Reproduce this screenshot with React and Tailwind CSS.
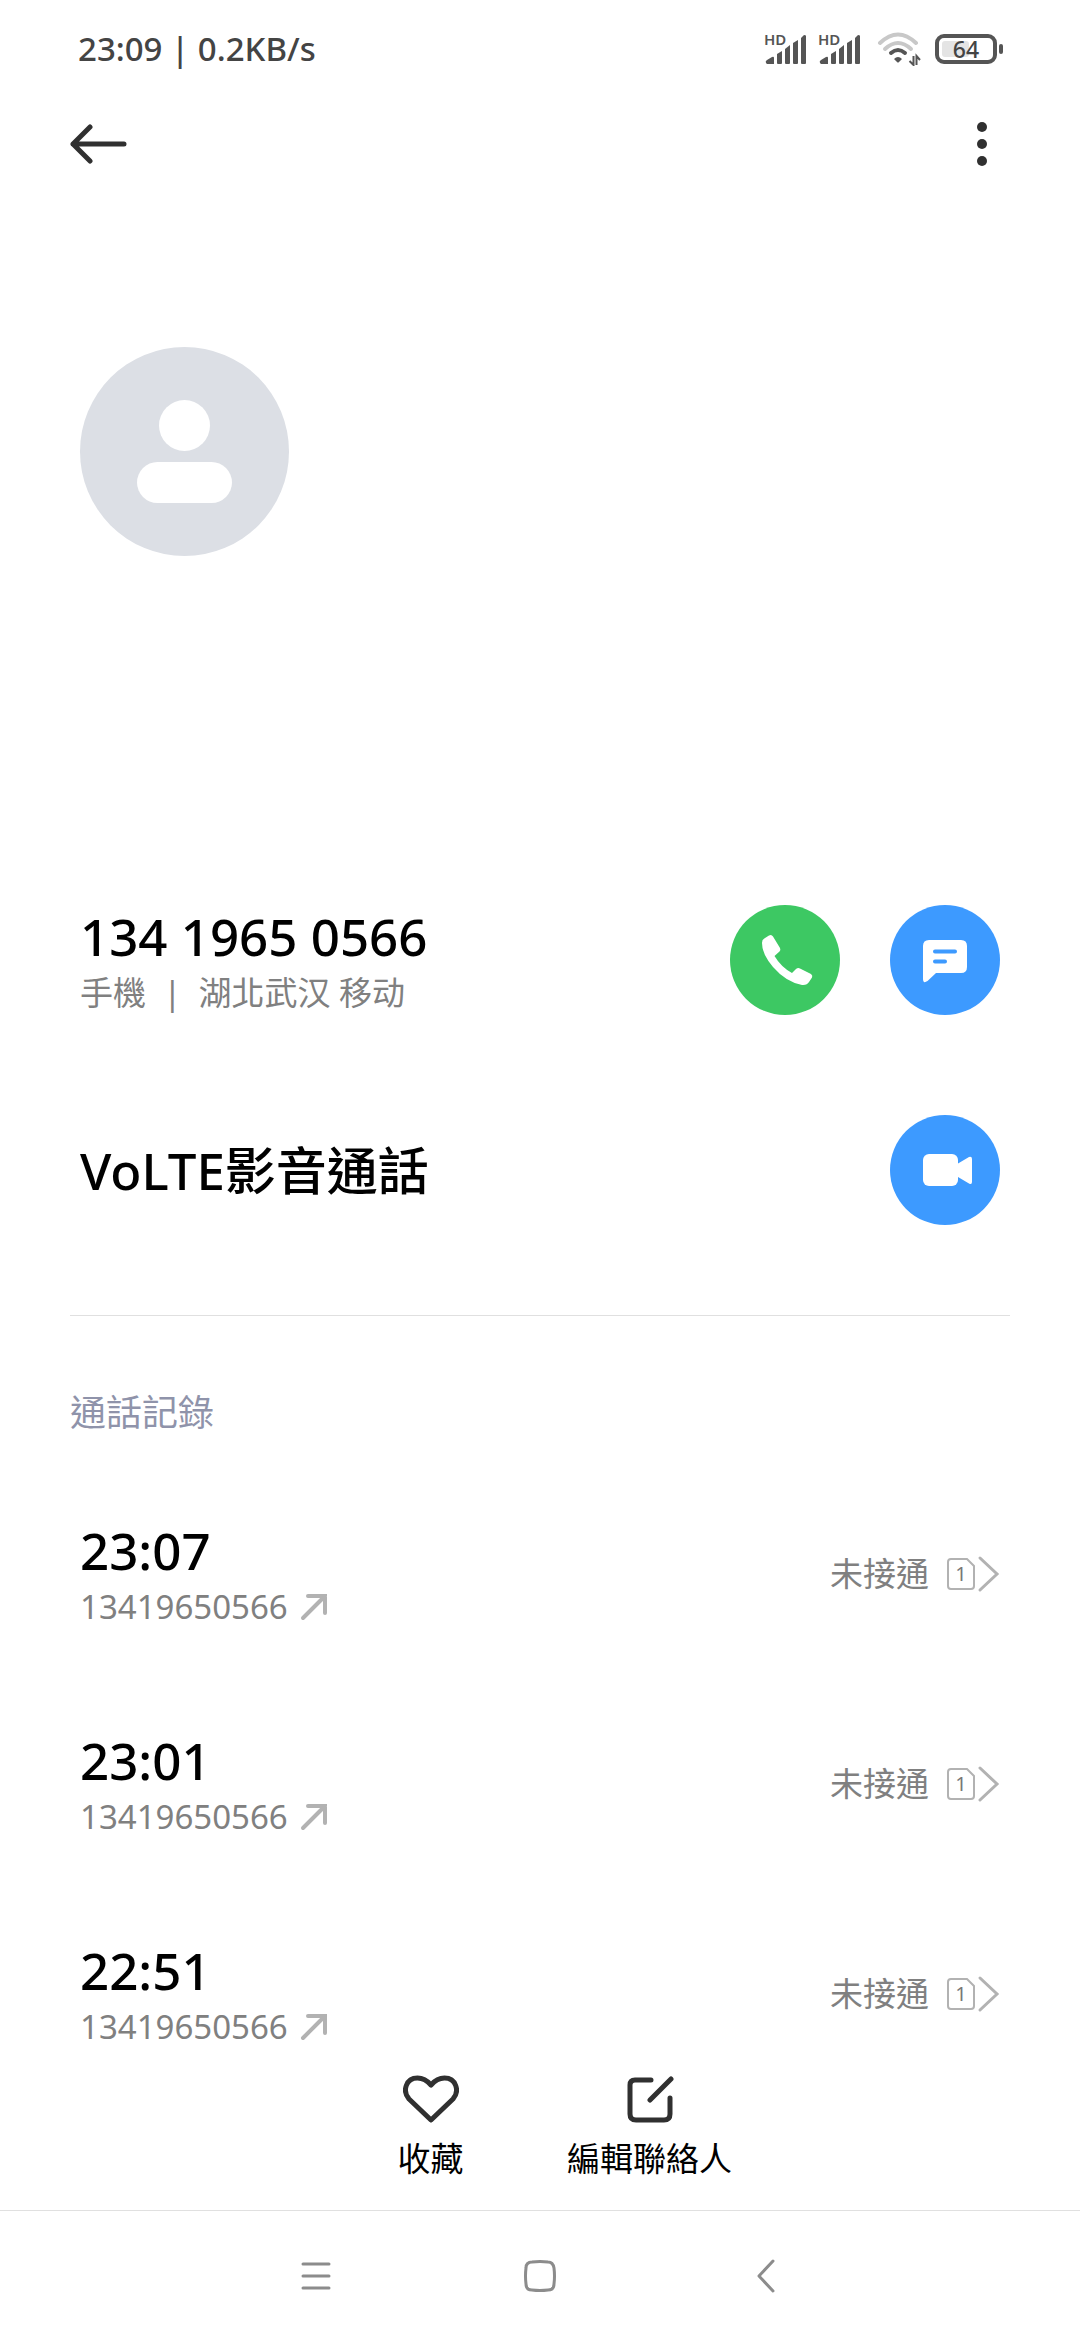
import React from 'react';

const callLog = [
  { time: '23:07', number: '13419650566', status: '未接通', sim: 1 },
  { time: '23:01', number: '13419650566', status: '未接通', sim: 1 },
  { time: '22:51', number: '13419650566', status: '未接通', sim: 1 },
];

const SignalIcon = () => (
  <svg width="42" height="42" viewBox="0 -5 42 42" fill="#555" className="overflow-visible font-['Noto_Sans']">
    <text x="-1" y="12" fontSize="15" fontWeight="600">HD</text>
    <path d="M1 30Q0 28 2 27L7 24Q9 23 9 25V31H2Z" />
    <path d="M12 21L17 18V30Q17 31 16 31H13Q12 31 12 30Z" />
    <path d="M20 16L25 12V30Q25 31 24 31H21Q20 31 20 30Z" />
    <path d="M28 10L33 7V30Q33 31 32 31H29Q28 31 28 30Z" />
    <path d="M36 5L39 2Q41 2 41 3V30Q41 31 40 31H37Q36 31 36 30Z" />
  </svg>
);

const WifiIcon = () => (
  <svg width="44" height="34" viewBox="0 0 44 34" fill="none" strokeLinecap="round">
    <path d="M3 11Q21 -6 39 11" stroke="#c8c8c8" strokeWidth="4" />
    <path d="M8 17Q21 5 34 17" stroke="#c8c8c8" strokeWidth="4" />
    <path d="M14 21Q21 15 28 21" stroke="#555" strokeWidth="4" />
    <path d="M17 27Q21 23 25 27L22 30Q21 31 20 30Z" fill="#555" />
    <path d="M36.500 24V33L32.500 29M39.500 33V24L43 28" stroke="#555" strokeWidth="2" strokeLinecap="butt" />
  </svg>
);

const Battery = ({ level }) => (
  <div className="flex items-center gap-[2px]">
    <div className="relative flex h-[30px] w-[62px] items-center justify-center rounded-[9px] border-4 border-[#555]">
      <div className="absolute inset-y-[3px] left-[3px] rounded-[3px] bg-[#e4e4e4]" style={{ width: `${level * 0.42}px` }} />
      <span className="relative text-[23px] leading-[22px] font-medium text-[#444]">{level}</span>
    </div>
    <div className="h-[10px] w-[4px] rounded-[2px] bg-[#555]" />
  </div>
);

const BackIcon = () => (
  <svg width="58" height="40" viewBox="0 0 58 40" fill="none" stroke="#303030" strokeWidth="5" strokeLinecap="round" strokeLinejoin="round">
    <path d="M54 20H3M20 3L3 20L20 37" />
  </svg>
);

const MoreIcon = () => (
  <svg width="12" height="46" viewBox="0 0 12 46" fill="#303030">
    <circle cx="6" cy="6" r="5" />
    <circle cx="6" cy="23" r="5" />
    <circle cx="6" cy="40" r="5" />
  </svg>
);

const PhoneIcon = () => (
  <svg viewBox="0 0 110 110" fill="#fff">
    <path d="M39 30.500Q41.500 29 43 31.500L50 43Q51 45 49.500 46.500L44.500 51Q51 62 62 68L66 64Q68 62.500 70 63.500L81 69Q83 70.500 82 72.500L79 77Q77 80.500 72 80Q56 77 43 62Q32 49 32 38Q32 34.500 35 33Z" />
  </svg>
);

const MessageIcon = () => (
  <svg viewBox="0 0 110 110" fill="#fff">
    <path d="M39 35H71Q77 35 77 41V62Q77 68 71 68H46L37.500 76Q33 79 33 74V41Q33 35 39 35Z" />
    <path d="M45 46.500H65M45 56.500H55" stroke="#3d9aff" strokeWidth="4" strokeLinecap="round" />
  </svg>
);

const VideoIcon = () => (
  <svg viewBox="0 0 110 110" fill="#fff">
    <rect x="33" y="39" width="35" height="32" rx="6" />
    <path d="M68 48.500L79 42Q82 41 82 44V67Q82 70 79 68.500L68 62Z" />
  </svg>
);

const OutgoingIcon = () => (
  <svg width="28" height="28" viewBox="0 0 28 28" fill="none" stroke="#b2b2b2" strokeWidth="4" strokeLinecap="round">
    <path d="M8 3H25V20M25 3L3 25" />
  </svg>
);

const SimIcon = ({ slot }) => (
  <svg width="28" height="32" viewBox="0 0 28 32" className="font-['Noto_Sans']">
    <path d="M4 1H20L27 8V28Q27 31 24 31H4Q1 31 1 28V4Q1 1 4 1Z" fill="none" stroke="#b2b2b2" strokeWidth="2" />
    <text x="14" y="23" fontSize="20" textAnchor="middle" fill="#777">{slot}</text>
  </svg>
);

const ChevronIcon = () => (
  <svg width="25" height="38" viewBox="0 0 25 38" fill="none" stroke="#b2b2b2" strokeWidth="3" strokeLinecap="round">
    <path d="M5 3L22 19L5 35" />
  </svg>
);

const HeartIcon = () => (
  <svg width="56" height="48" viewBox="0 0 56 48" fill="none" stroke="#303030" strokeWidth="5" strokeLinejoin="round">
    <path d="M28 10Q22 3 14.500 3C3 3 -1 16 6 24L28 45L50 24C57 16 53 3 41.500 3Q34 3 28 10Z" />
  </svg>
);

const EditIcon = () => (
  <svg width="48" height="48" viewBox="0 0 48 48" fill="none" stroke="#303030" strokeWidth="5" strokeLinecap="round">
    <path d="M25 5H9Q4 5 4 10V39Q4 45 10 45H38Q44 45 44 39V23M24 25L45 4" />
  </svg>
);

const CircleButton = ({ label, className, children }) => (
  <button type="button" aria-label={label} className={`size-[110px] rounded-full ${className}`}>
    {children}
  </button>
);

const App = () => {
  return (
    <div className="flex h-screen flex-col bg-white font-['Noto_Sans','Noto_Sans_CJK_TC',sans-serif] text-black">
      {/* Status bar */}
      <div className="flex h-[98px] shrink-0 items-center justify-between pr-[77px] pl-[78px] text-[#444]">
        <div className="text-[33px] leading-[48px] font-medium">23:09 | 0.2KB/s</div>
        <div className="flex items-center gap-3">
          <SignalIcon />
          <SignalIcon />
          <div className="flex items-center gap-[14px] pl-1">
            <WifiIcon />
            <Battery level={64} />
          </div>
        </div>
      </div>

      <header className="flex h-[92px] shrink-0 items-center justify-between pr-[92px] pl-[70px]">
        <button type="button" aria-label="返回"><BackIcon /></button>
        <button type="button" aria-label="更多"><MoreIcon /></button>
      </header>

      <main className="min-h-0 flex-1 overflow-hidden">
        {/* Avatar */}
        <div className="px-20 pt-[157px] pb-[299px]">
          <div className="flex size-[209px] flex-col items-center gap-[11px] rounded-full bg-[#dcdfe5] pt-[53px]">
            <div className="size-[51px] rounded-full bg-white" />
            <div className="h-[41px] w-[95px] rounded-full bg-white" />
          </div>
        </div>

        {/* Numbers */}
        <section className="px-20">
          <div className="flex h-[210px] items-center justify-between">
            <div>
              <h1 className="text-[51px] leading-[66px] font-medium">134 1965 0566</h1>
              <p className="text-[33px] leading-[48px] whitespace-pre text-[#808080]">手機  |  湖北武汉 移动</p>
            </div>
            <div className="flex gap-[50px]">
              <CircleButton label="撥號" className="bg-[#3dc863]"><PhoneIcon /></CircleButton>
              <CircleButton label="訊息" className="bg-[#3d9aff]"><MessageIcon /></CircleButton>
            </div>
          </div>
          <div className="flex h-[210px] items-center justify-between">
            <h2 className="text-[51px] leading-[66px] font-medium">VoLTE影音通話</h2>
            <CircleButton label="視訊" className="bg-[#3d9aff]"><VideoIcon /></CircleButton>
          </div>
        </section>

        <hr className="mx-[70px] mt-10 border-[#e0e0e0]" />

        {/* Call log */}
        <section>
          <h2 className="px-[70px] pt-[73px] pb-8 text-4xl leading-[48px] text-[#8f93aa]">通話記錄</h2>
          <ul>
            {callLog.map((call) => (
              <li key={call.time} className="flex h-[210px] items-center justify-between px-20">
                <div>
                  <div className="text-[51px] leading-[66px] font-medium">{call.time}</div>
                  <div className="flex items-center gap-3 text-[33px] leading-[48px] text-[#808080]">
                    {call.number}
                    <OutgoingIcon />
                  </div>
                </div>
                <div className="flex items-center">
                  <span className="mr-[18px] text-[33px] leading-[48px] text-[#808080]">{call.status}</span>
                  <SimIcon slot={call.sim} />
                  <ChevronIcon />
                </div>
              </li>
            ))}
          </ul>
        </section>
      </main>

      {/* Bottom actions */}
      <div className="flex h-[157px] shrink-0 justify-center bg-white pt-[22px] text-[33px] leading-[48px]">
        <button type="button" className="flex w-[219px] flex-col items-center gap-3">
          <HeartIcon />
          <span>收藏</span>
        </button>
        <button type="button" className="flex w-[219px] flex-col items-center gap-3">
          <EditIcon />
          <span>編輯聯絡人</span>
        </button>
      </div>

      {/* System navigation */}
      <nav className="flex h-[130px] shrink-0 items-center justify-center border-t border-[#e0e0e0]">
        <button type="button" aria-label="選單" className="flex w-[224px] justify-center">
          <svg width="30" height="30" viewBox="0 0 30 30" stroke="#8c8c8c" strokeWidth="3" strokeLinecap="round">
            <path d="M2 3H28M2 15H28M2 27H28" />
          </svg>
        </button>
        <button type="button" aria-label="主畫面" className="flex w-[224px] justify-center">
          <svg width="32" height="32" viewBox="0 0 32 32" fill="none" stroke="#8c8c8c" strokeWidth="3">
            <path d="M8 2Q16 1 24 2Q29 2 30 8Q31 16 30 24Q30 30 24 30Q16 31 8 30Q2 30 2 24Q1 16 2 8Q2 2 8 2Z" />
          </svg>
        </button>
        <button type="button" aria-label="上一頁" className="flex w-[224px] justify-center">
          <svg width="22" height="34" viewBox="0 0 22 34" fill="none" stroke="#8c8c8c" strokeWidth="3" strokeLinecap="round" strokeLinejoin="round">
            <path d="M20 2L6 17L20 32" />
          </svg>
        </button>
      </nav>
    </div>
  );
};

export default App;
